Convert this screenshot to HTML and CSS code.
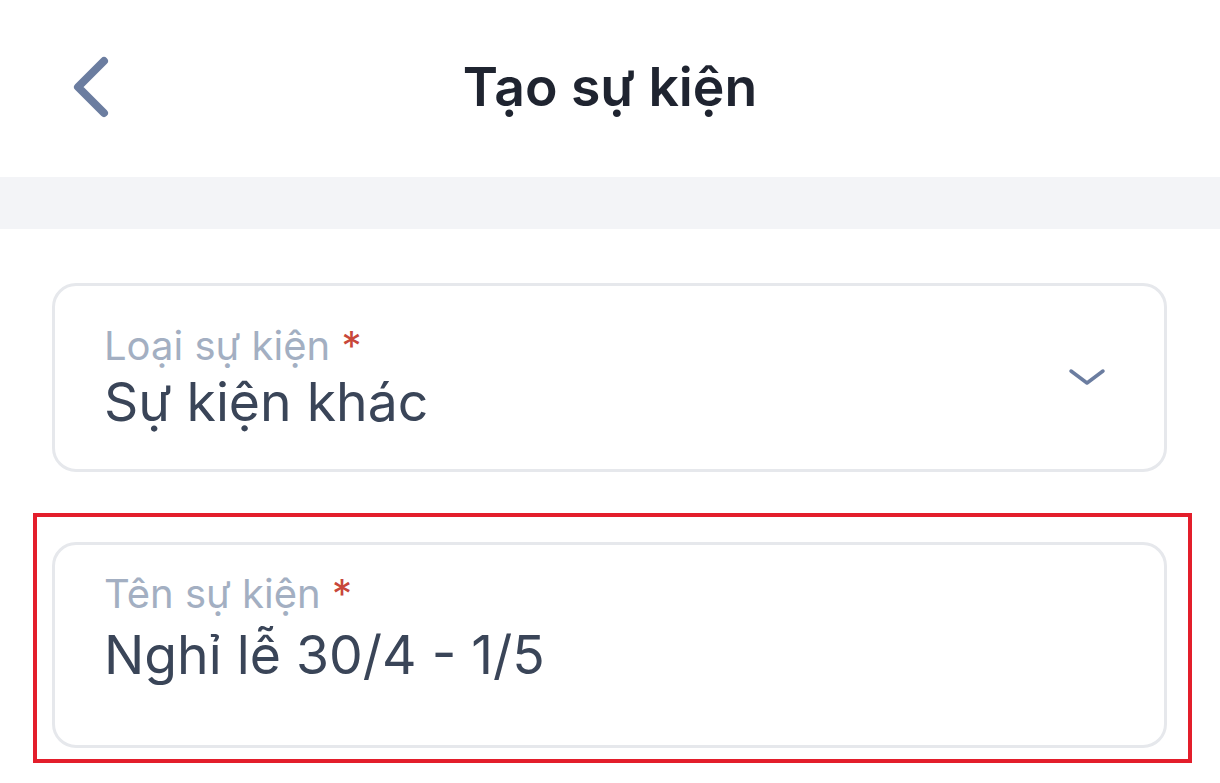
FILE: index.html
```html
<!DOCTYPE html>
<html lang="vi">
<head>
<meta charset="utf-8">
<title>Tạo sự kiện</title>
<link rel="stylesheet" href="styles.css">
</head>
<body>
<header class="topbar">
  <div class="topbar-left">
    <svg class="back-icon" width="50" height="70" viewBox="0 0 50 70">
      <path d="M34 6 L8 32 L34 58" fill="none" stroke="#6b7da0" stroke-width="8" stroke-linecap="round" stroke-linejoin="round"/>
    </svg>
  </div>
  <h1 class="title">Tạo sự kiện</h1>
  <div class="topbar-right"></div>
</header>
<div class="band"></div>
<main class="form">
  <div class="field field-select">
    <div class="field-body">
      <div class="label">Loại sự kiện <span class="req">*</span></div>
      <div class="value">Sự kiện khác</div>
    </div>
    <svg class="chev" width="40" height="24" viewBox="0 0 40 24">
      <path d="M3 4 L19 16 L35 4" fill="none" stroke="#6b7da0" stroke-width="3.5" stroke-linecap="round" stroke-linejoin="round"/>
    </svg>
  </div>
  <div class="highlight">
    <div class="field field-name">
      <div class="field-body">
        <div class="label">Tên sự kiện <span class="req">*</span></div>
        <div class="value value-name">Nghỉ lễ 30/4 - 1/5</div>
      </div>
    </div>
  </div>
</main>
</body>
</html>
```

FILE: styles.css
```css
* { box-sizing: border-box; }
html, body { margin: 0; padding: 0; background: #ffffff; }
body {
  width: 1220px;
  height: 783px;
  overflow: hidden;
  font-family: Inter, "Noto Sans", "Liberation Sans", sans-serif;
}
.topbar {
  height: 177px;
  display: grid;
  grid-template-columns: 1fr auto 1fr;
  align-items: center;
}
.topbar-left {
  display: flex;
  align-items: center;
  padding-left: 70px;
  padding-top: 2px;
}
.back-icon { display: block; }
.title {
  margin: 0;
  font-size: 53.5px;
  font-weight: 600;
  color: #1f2430;
  padding-bottom: 4px;
}
.band {
  height: 52px;
  background: #f3f4f7;
}
.form {
  padding: 54px 53px 0 52px;
}
.field {
  border: 3px solid #e6e8ec;
  border-radius: 24px;
  display: flex;
  align-items: center;
  background: #fff;
}
.field-select {
  height: 189px;
  padding: 0 56px 0 49px;
}
.field-body { flex: 1; }
.label {
  font-size: 40px;
  color: #a3afc2;
  line-height: 46px;
}
.req { color: #c8473a; }
.value {
  font-size: 53.5px;
  color: #3a4558;
  line-height: 62px;
  margin-top: 2px;
}
.value-name { margin-top: 7px; }
.chev { display: block; margin-top: 2px; }
.highlight {
  margin: 41px -25px 0 -19px;
  border: 4px solid #e31e2b;
  padding: 25px 21px 11px 15px;
}
.field-name {
  height: 206px;
  align-items: flex-start;
  padding: 26px 56px 0 49px;
}
```
